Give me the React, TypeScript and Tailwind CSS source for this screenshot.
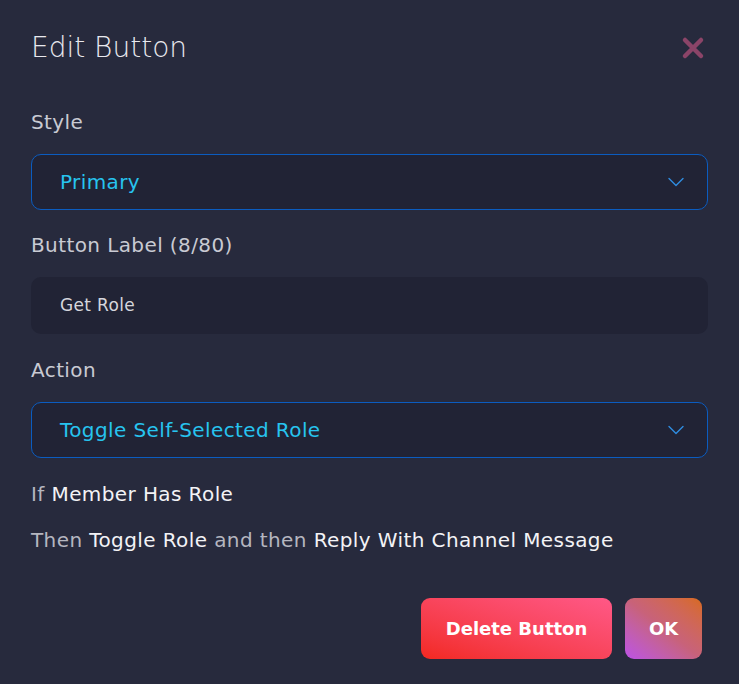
import { ChevronDown } from 'lucide-react'

function Select({ value }: { value: string }) {
    return (
        <div className="flex h-[56px] items-center justify-between rounded-[10px] border border-[#0b5cc0] bg-[#212335] pl-[28px] pr-[17px]">
            <span className="text-[20px] leading-[24px] tracking-[0.02em] text-[#27c4ef]">{value}</span>
            <ChevronDown className="h-[28px] w-[28px] text-[#2f8de0]" strokeWidth={1.2} />
        </div>
    )
}

export default function App() {
    return (
        <div
            className="flex min-h-[684px] w-full flex-col bg-[#272a3d] px-[31px] pt-[30px]"
            style={{ fontFamily: '"DejaVu Sans", "Noto Sans", sans-serif' }}
        >
            <div className="flex h-[36px] items-center justify-between">
                <h1 className="text-[28px] font-extralight leading-[36px] text-[#e8e8ee]">Edit Button</h1>
                <svg width="24" height="24" viewBox="0 0 24 24" className="mr-[3px]">
                    <path d="M4 4 L20 20 M20 4 L4 20" stroke="#8b4468" strokeWidth="4.5" strokeLinecap="round" />
                </svg>
            </div>

            <label className="mt-[44px] text-[20px] leading-[24px] tracking-[0.02em] text-[#c9cad3]">Style</label>
            <div className="mt-[20px]">
                <Select value="Primary" />
            </div>

            <label className="mt-[23px] text-[20px] leading-[24px] tracking-[0.02em] text-[#c9cad3]">
                Button Label (8/80)
            </label>
            <div className="mt-[20px] flex h-[57px] items-center rounded-[10px] bg-[#212335] px-[29px]">
                <span className="text-[17px] tracking-[0.02em] text-[#d6d6dc]">Get Role</span>
            </div>

            <label className="mt-[24px] text-[20px] leading-[24px] tracking-[0.02em] text-[#c9cad3]">Action</label>
            <div className="mt-[20px]">
                <Select value="Toggle Self-Selected Role" />
            </div>

            <p className="mt-[24px] text-[20px] leading-[24px] tracking-[0.02em] text-[#b5b6c0]">
                If <span className="text-[#f3f3f6]">Member Has Role</span>
            </p>
            <p className="mt-[22px] text-[20px] leading-[24px] tracking-[0.02em] text-[#b5b6c0]">
                Then <span className="text-[#f3f3f6]">Toggle Role</span> and then{' '}
                <span className="text-[#f3f3f6]">Reply With Channel Message</span>
            </p>

            <div className="mt-[46px] flex justify-end gap-[13px] pr-[6px]">
                <button className="h-[61px] w-[191px] rounded-[9px] bg-gradient-to-tr from-[#f2281f] to-[#ff5887] text-[18px] font-bold text-white">
                    Delete Button
                </button>
                <button className="h-[61px] w-[77px] rounded-[9px] bg-gradient-to-tr from-[#bd50e6] via-[#c8627a] to-[#d86a18] text-[18px] font-bold text-white">
                    OK
                </button>
            </div>
        </div>
    )
}
